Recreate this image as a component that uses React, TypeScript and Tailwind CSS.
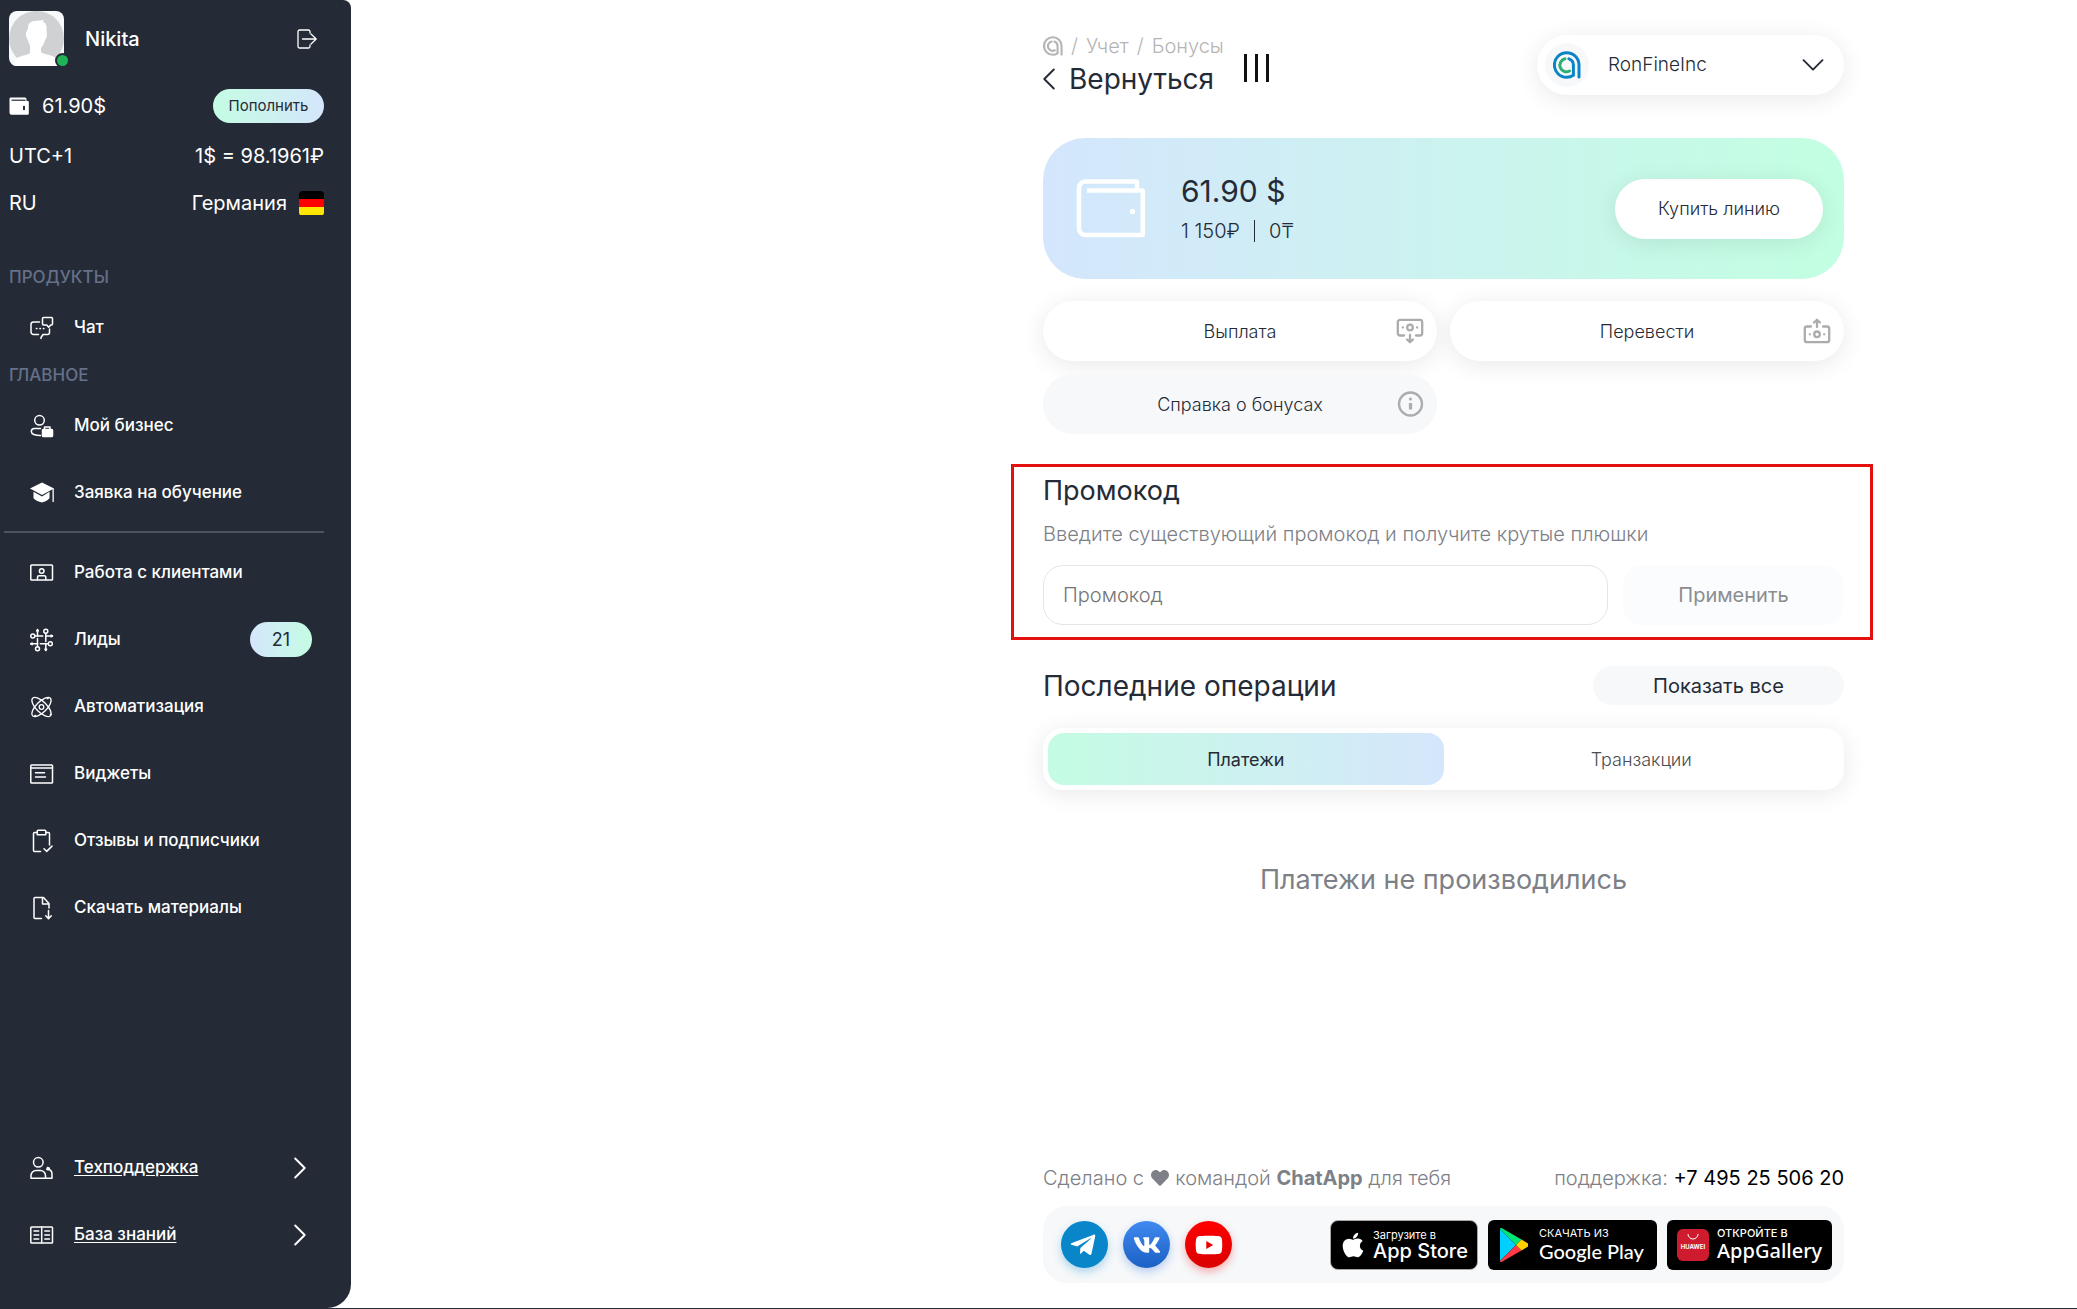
import React, { useState } from 'react';
import { FaApple, FaHeart, FaTelegramPlane, FaVk, FaYoutube } from 'react-icons/fa';

interface IconProps {
  className?: string;
}

const stroke = {
  fill: 'none',
  stroke: 'currentColor',
  strokeWidth: 1.5,
  strokeLinecap: 'round',
  strokeLinejoin: 'round',
} as const;

const ChatIcon = () => (
  <svg viewBox="0 0 24 24" className="size-6" {...stroke}>
    <path d="M13.5 1.5h8a1 1 0 0 1 1 1v5.500a1 1 0 0 1-1 1h-.8l-2 2.300-2-2.300h-3.200a1 1 0 0 1-1-1v-5.500a1 1 0 0 1 1-1z" />
    <path d="M9.500 6H3.500a2.500 2.500 0 0 0-2.500 2.500v7.500a2.500 2.500 0 0 0 2.500 2.500h5M11 22.500v-1l2-3h4.500a2 2 0 0 0 2-2v-3.500" />
    <path d="M6.500 12.500h.3M10 12.500h.3M13.500 12.500h.3" strokeWidth="1.7" />
  </svg>
);

const BusinessIcon = () => (
  <svg viewBox="0 0 24 24" className="size-6" {...stroke}>
    <circle cx="9.500" cy="6.300" r="4.800" />
    <path d="M10.500 21.500C5 21.500 1.300 20 1.300 17.500c0-2.500 1.500-2.900 3.200-2.900h6" />
    <path d="M14.500 15.500v-2.500h5.500v2.500" />
    <rect x="12.500" y="15.500" width="10" height="7" rx=".8" fill="currentColor" />
  </svg>
);

const CapIcon = () => (
  <svg viewBox="0 0 24 24" className="size-6" fill="currentColor">
    <path d="M0 7.500 12 1.500l12 6-12 6.500z" />
    <path d="M3.500 10.800 12 15.500l7.500-4.700v6.500c-2 2-4.500 3.600-7.500 4.200-3.500-.6-6.500-2.200-8.500-4.200z" />
    <path d="M22.500 7.500h1.300V21h-1.300z" />
  </svg>
);

const ClientsIcon = () => (
  <svg viewBox="0 0 24 24" className="size-6" {...stroke}>
    <rect x=".8" y="4" width="21.700" height="15" rx=".8" />
    <circle cx="11.700" cy="10" r="2.300" />
    <path d="M7.500 18.800v-2.600a1.500 1.500 0 0 1 1.500-1.500h5.300a1.500 1.500 0 0 1 1.500 1.500v2.600" />
  </svg>
);

const LeadsIcon = () => (
  <svg viewBox="0 0 24 24" className="size-6" {...stroke}>
    <circle cx="2.800" cy="8" r="2" />
    <circle cx="15.800" cy="3.200" r="2" />
    <circle cx="20.300" cy="15.800" r="2" />
    <circle cx="7.500" cy="20.800" r="2" />
    <path d="M4.800 8h8M15.800 5.200v8.300M18.300 15.800h-8M7.500 18.800v-8.300" />
    <path d="M15.800 8h6.500M1 15.800h6.500M7.500 8V1.700M15.800 15.800v6.300" />
    <path d="M21 7.200 22.500 8 21 8.800M2.200 15 .7 15.800l1.500.8M6.700 2.900 7.500 1.500l.8 1.400M15 21.200l.8 1.300.8-1.300" />
  </svg>
);

const AtomIcon = () => (
  <svg viewBox="0 0 24 24" className="size-6" {...stroke} strokeWidth="1.300">
    <ellipse cx="11.500" cy="12" rx="12.500" ry="5.300" transform="rotate(45 11.500 12)" />
    <ellipse cx="11.500" cy="12" rx="12.500" ry="5.300" transform="rotate(-45 11.500 12)" />
    <circle cx="11.500" cy="12" r="2.300" />
    <path d="M17.500 3.300h.4M5 20.700h.4M20.700 19.500v.3" strokeWidth="2" />
  </svg>
);

const WidgetsIcon = () => (
  <svg viewBox="0 0 24 24" className="size-6" {...stroke}>
    <rect x=".8" y="3" width="21.700" height="18" rx=".8" />
    <path d="M1 6h21.500M5.500 10.800h9M5.500 15h10" />
  </svg>
);

const ReviewsIcon = () => (
  <svg viewBox="0 0 24 24" className="size-6" {...stroke}>
    <path d="M7 3.500H4.500a1 1 0 0 0-1 1v17a1 1 0 0 0 1 1h6M16 3.500h2.500a1 1 0 0 1 1 1V16" />
    <path d="M7.200 2.300a1 1 0 0 1 1-1h6.600a1 1 0 0 1 1 1v3.500H7.200z" />
    <path d="m14 19.800 2.700 2.600 5.300-5.300" />
  </svg>
);

const MaterialsIcon = () => (
  <svg viewBox="0 0 24 24" className="size-6" {...stroke}>
    <path d="M11.500 22.500H5a1 1 0 0 1-1-1V2.500a1 1 0 0 1 1-1h8.500L19 7.500v4.500M12.500 1.800V8h6.300" />
    <path d="M18.500 14.500v8M15.700 19.800l2.800 2.800 2.800-2.800" />
  </svg>
);

const SupportIcon = () => (
  <svg viewBox="0 0 24 24" className="size-6" {...stroke}>
    <circle cx="8.300" cy="6.300" r="4.800" />
    <path d="M1 22.300v-2.800a5 5 0 0 1 5-5h4.500a5 5 0 0 1 5 5v2.800zM15.500 22.300H22v-4.500c0-2-.8-3.300-2.500-4.300" />
    <path d="M17.500 11.500l1.800.7-.5 1.600-2-.4z" fill="currentColor" />
  </svg>
);

const BookIcon = () => (
  <svg viewBox="0 0 24 24" className="size-6" {...stroke}>
    <rect x=".8" y="4" width="21.700" height="16" rx=".8" />
    <path d="M11.700 4v16M4 8h4.700M4 12h4.700M4 16h4.700M14.800 8h4.700M14.800 12h4.700M14.800 16h4.700" />
  </svg>
);

const LogoutIcon = () => (
  <svg viewBox="0 0 20 20" className="size-5" {...stroke} strokeWidth="1.300">
    <path d="M13 4V2.500a1.500 1.500 0 0 0-1.500-1.500H2.500A1.500 1.500 0 0 0 1 2.500v15A1.500 1.500 0 0 0 2.500 19h9a1.500 1.500 0 0 0 1.500-1.500V16" />
    <path d="M5.500 10H19M14 5l5.200 5-5.200 5" />
  </svg>
);

const WalletSolidIcon = () => (
  <svg viewBox="0 0 20 20" className="size-5">
    <path d="M2 1.500h14a1.500 1.500 0 0 1 1.500 1.500v2H19a.8.8 0 0 1 .8.800v12a1 1 0 0 1-1 1H2.500a2 2 0 0 1-2-2v-14A1.500 1.500 0 0 1 2 1.500z" fill="#fff" />
    <path d="M2.500 4.200h14" stroke="#242b37" strokeWidth="1.200" />
    <rect x="14" y="9.700" width="2" height="4.500" rx=".7" fill="#242b37" />
  </svg>
);

const WalletOutlineIcon = () => (
  <svg viewBox="0 0 70 60" className="h-[60px] w-[70px]" fill="none" stroke="#fff" strokeWidth="4.500">
    <path d="M61 11V3.500a1 1 0 0 0-1-1H9.500a6.500 6.500 0 0 0-6.500 6.500v40.500a6.500 6.500 0 0 0 6.500 6.500h56.500a.8.800 0 0 0 .8-.8V12.200a.8.800 0 0 0-.8-.8H11" />
    <rect x="54" y="30" width="5" height="5" rx="1.500" fill="#fff" stroke="none" />
  </svg>
);

const PayoutIcon = () => (
  <svg viewBox="0 0 28 28" className="size-7" {...stroke} strokeWidth="2.300">
    <path d="M8 18.500H4a2.200 2.200 0 0 1-2.200-2.200V5A2.200 2.200 0 0 1 4 2.800h20a2.200 2.200 0 0 1 2.200 2.200v11.300A2.200 2.200 0 0 1 24 18.500h-4" />
    <circle cx="14" cy="10.500" r="2.800" />
    <path d="M6.800 10.500h.1M21.100 10.500h.1M14 18v7M11 22.500l3 2.700 3-2.700" />
  </svg>
);

const TransferIcon = () => (
  <svg viewBox="0 0 28 28" className="size-7" {...stroke} strokeWidth="2.300">
    <path d="M8 9.500H4a2.200 2.200 0 0 0-2.200 2.200v11.300A2.200 2.200 0 0 0 4 25.200h20a2.200 2.200 0 0 0 2.200-2.200V11.700A2.200 2.200 0 0 0 24 9.500h-4" />
    <circle cx="14" cy="17.300" r="2.800" />
    <path d="M6.800 17.300h.1M21.100 17.300h.1M14 10V3M11 5.500l3-2.700 3 2.700" />
  </svg>
);

const InfoIcon = () => (
  <svg viewBox="0 0 28 28" className="size-7" {...stroke} strokeWidth="2.300">
    <circle cx="14.500" cy="14" r="11.500" />
    <path d="M14.500 13v6.500" strokeWidth="3.200" strokeLinecap="butt" />
    <path d="M14.500 9v.1" strokeWidth="3" />
  </svg>
);

const ChevronIcon: React.FC<IconProps> = ({ className }) => (
  <svg viewBox="0 0 12 22" className={className} {...stroke} strokeWidth="1.900">
    <path d="m1.200 1.500 9.500 9.500-9.500 9.500" />
  </svg>
);

const ChatAppMark: React.FC<IconProps & { inner: string }> = ({ className, inner }) => (
  <svg viewBox="0 0 28 28" className={className} fill="none" strokeWidth="3" strokeLinecap="round">
    <path d="M26 26V14A12.300 12.300 0 1 0 13.700 26.300c2.500 0 4.700-.7 6.700-2V14a6.600 6.600 0 0 0-4.500-6.200" stroke="currentColor" />
    <path d="M12 7.700a6.600 6.600 0 1 0 4.500 12.300" stroke={inner} />
  </svg>
);

const PlayTriangle = () => (
  <svg viewBox="0 0 28 34" className="h-[34px] w-7">
    <path d="M0 1v32l16-16z" fill="#00d0ff" />
    <path d="M0 1c0-1 1-1.300 2-.7L21.500 11.500 16 17z" fill="#00e676" />
    <path d="M0 33c0 1 1 1.300 2 .7L21.500 22.500 16 17z" fill="#ff3a44" />
    <path d="M21.500 11.500 28 15.500c1 .8 1 2.200 0 3L21.500 22.500 16 17z" fill="#ffcf00" />
  </svg>
);

const HuaweiMark = () => (
  <span className="flex h-8 w-8 flex-col items-center rounded-md bg-[#ce1b2d] pt-1">
    <svg viewBox="0 0 12 8" className="h-2 w-3" fill="none" stroke="#fff">
      <path d="M1 1a5 5 0 0 0 10 0" />
    </svg>
    <span className="text-[6px] leading-[12px] font-bold">HUAWEI</span>
  </span>
);

const mainItems = [
  { label: 'Мой бизнес', icon: <BusinessIcon /> },
  { label: 'Заявка на обучение', icon: <CapIcon /> },
];

const workItems = [
  { label: 'Работа с клиентами', icon: <ClientsIcon /> },
  { label: 'Лиды', icon: <LeadsIcon />, badge: 21 },
  { label: 'Автоматизация', icon: <AtomIcon /> },
  { label: 'Виджеты', icon: <WidgetsIcon /> },
  { label: 'Отзывы и подписчики', icon: <ReviewsIcon /> },
  { label: 'Скачать материалы', icon: <MaterialsIcon /> },
];

const helpItems = [
  { label: 'Техподдержка', icon: <SupportIcon /> },
  { label: 'База знаний', icon: <BookIcon /> },
];

interface NavItemProps {
  label: string;
  icon: React.ReactNode;
  badge?: number;
  help?: boolean;
}

const NavItem: React.FC<NavItemProps> = ({ label, icon, badge, help }) => (
  <a href="#" className="flex h-[67px] items-center pr-3 pl-[21px] text-[17px] font-medium">
    {icon}
    <span className={help ? 'ml-5 underline underline-offset-2' : 'ml-5'}>{label}</span>
    {badge && (
      <span className="ml-auto flex h-[35px] w-[62px] items-center justify-center rounded-full bg-linear-to-r from-[#d5e6fc] to-[#c4fce3] text-[18px] font-normal text-[#242b37]">
        {badge}
      </span>
    )}
    {help && <ChevronIcon className="mr-[6px] ml-auto h-[22px] w-3" />}
  </a>
);

const Sidebar = () => (
  <aside className="flex w-[351px] shrink-0 flex-col rounded-br-3xl rounded-tr-lg bg-[#242b37] pr-[27px] pb-10 pl-[9px] text-white">
    <div className="flex items-center pt-[11px]">
      <div className="relative">
        <svg viewBox="0 0 55 55" className="size-[55px] rounded-lg bg-[#f7f9fb]">
          <circle cx="27.500" cy="27.500" r="27.500" fill="#cfd1d2" />
          <path d="M19 17c0-5 3-7 7-7l9-1-1 2c3 1 4 4 3.500 8 0 3 1 4 .2 7-.5 2-1.500 2-2 4-.5 3-2.500 5-3.700 7v4c3 3 11 2 16 7l5 7H2l4-6c4-5 11-4 15-7v-8c-2-3-2-5-3-7-2-3-1-5 1-10z" fill="#fff" />
        </svg>
        <span className="absolute -right-[6px] -bottom-[2px] size-[15px] rounded-full border-2 border-[#242b37] bg-[#1fb355]" />
      </div>
      <span className="ml-[21px] text-xl font-medium">Nikita</span>
      <button aria-label="Выйти" className="mr-[7px] ml-auto">
        <LogoutIcon />
      </button>
    </div>
    <div className="mt-[23px] flex h-[34px] items-center">
      <WalletSolidIcon />
      <span className="ml-[13px] text-xl">61.90$</span>
      <button className="ml-auto h-[34px] w-[111px] rounded-full bg-linear-to-r from-[#c4fce3] to-[#d5e6fc] text-[15px] text-[#242b37]">
        Пополнить
      </button>
    </div>
    <div className="mt-[10px] flex h-[46px] items-center justify-between text-xl">
      <span>UTC+1</span>
      <span>1$ = 98.1961₽</span>
    </div>
    <div className="flex h-12 items-center text-xl">
      <span>RU</span>
      <span className="mr-3 ml-auto">Германия</span>
      <span className="flex size-[25px] flex-col overflow-hidden rounded-sm">
        <span className="flex-1 bg-black" />
        <span className="flex-1 bg-[#fe0000]" />
        <span className="flex-1 bg-[#ffe600]" />
      </span>
    </div>
    <nav className="mt-9">
      <h2 className="mb-[3px] text-[17px] leading-7 font-medium text-[#65708a]">ПРОДУКТЫ</h2>
      <NavItem label="Чат" icon={<ChatIcon />} />
      <h2 className="mb-[3px] text-[17px] leading-7 font-medium text-[#65708a]">ГЛАВНОЕ</h2>
      {mainItems.map((item) => (
        <NavItem key={item.label} {...item} />
      ))}
      <hr className="mt-[5px] mb-[6px] -ml-[5px] border-t-2 border-[#4d535f]" />
      {workItems.map((item) => (
        <NavItem key={item.label} {...item} />
      ))}
    </nav>
    <nav className="mt-auto">
      {helpItems.map((item) => (
        <NavItem key={item.label} {...item} help />
      ))}
    </nav>
  </aside>
);

interface ActionButtonProps {
  label: string;
  icon: React.ReactNode;
  muted?: boolean;
}

const ActionButton: React.FC<ActionButtonProps> = ({ label, icon, muted }) => (
  <button
    className={`relative h-[60px] rounded-full text-[18px] font-light ${
      muted ? 'bg-[#f6f8fa]' : 'bg-white shadow-[0_4px_24px_rgba(0,0,0,0.09)]'
    }`}
  >
    {label}
    <span className="absolute top-4 right-[13px] text-[#acacac]">{icon}</span>
  </button>
);

const Header = () => (
  <header className="flex items-end pt-[34px]">
    <div>
      <div className="flex h-6 items-center gap-2 text-xl font-light text-[#b5b5b5]">
        <a href="#" aria-label="Главная">
          <ChatAppMark className="size-5" inner="currentColor" />
        </a>
        <span>/</span>
        <a href="#">Учет</a>
        <span>/</span>
        <a href="#">Бонусы</a>
      </div>
      <button className="mt-[5px] flex items-center gap-[14px] text-[28px] leading-8 font-normal">
        <ChevronIcon className="h-[22px] w-3 rotate-180" />
        Вернуться
      </button>
    </div>
    <button aria-label="Меню" className="mb-[13px] ml-5 flex gap-2">
      <span className="h-7 w-[3px] bg-[#111]" />
      <span className="h-7 w-[3px] bg-[#111]" />
      <span className="h-7 w-[3px] bg-[#111]" />
    </button>
    <div className="relative ml-auto h-[60px] w-[307px] rounded-full bg-white shadow-[0_4px_24px_rgba(0,0,0,0.09)]">
      <select
        aria-label="Компания"
        className="h-[60px] w-full appearance-none rounded-full bg-transparent pr-14 pl-[71px] text-[19px] font-light"
      >
        <option>RonFineInc</option>
      </select>
      <span className="pointer-events-none absolute top-2 left-2 flex size-11 items-center justify-center rounded-full bg-[#f6f8fa]">
        <ChatAppMark className="size-7 text-[#0b84c6]" inner="#2fae73" />
      </span>
      <ChevronIcon className="pointer-events-none absolute top-[19px] right-[25px] h-[22px] w-3 rotate-90" />
    </div>
  </header>
);

const Balance = () => (
  <section className="mt-[43px] flex h-[141px] items-center rounded-[42px] bg-linear-to-r from-[#d4e6fd] to-[#c2ffe1] pr-[21px] pl-[33px]">
    <WalletOutlineIcon />
    <div className="ml-[35px]">
      <p className="text-[30px] leading-10">61.90 $</p>
      <p className="mt-1 flex h-8 items-center gap-[14px] text-xl font-light">
        1 150₽
        <span className="h-[22px] w-px bg-[#242b37]" />
        0₸
      </p>
    </div>
    <button className="ml-auto h-[60px] w-[208px] rounded-full bg-white text-[18px] font-light shadow-[0_4px_24px_rgba(0,0,0,0.09)]">
      Купить линию
    </button>
  </section>
);

const PromoCode = () => {
  const [code, setCode] = useState('');

  return (
    <section className="mt-[30px] -mr-[29px] -ml-8 border-[3px] border-[#e3100f] pr-[26px] pb-3 pl-[29px]">
      <h2 className="pt-2 text-[27px] leading-8">Промокод</h2>
      <label htmlFor="promo" className="mt-[11px] block text-xl leading-8 font-light text-[#7d8087]">
        Введите существующий промокод и получите крутые плюшки
      </label>
      <div className="mt-[15px] flex gap-[15px]">
        <input
          id="promo"
          value={code}
          onChange={(e) => setCode(e.target.value)}
          placeholder="Промокод"
          className="h-[60px] min-w-0 flex-1 rounded-[20px] border border-[#e3e5e7] px-[19px] text-xl font-light outline-none placeholder:text-[#757575]"
        />
        <button disabled={!code} className="h-[60px] w-[221px] rounded-[20px] bg-[#f6f8fa] text-xl disabled:bg-[#fafcfd] disabled:text-[#8b8d90]">
          Применить
        </button>
      </div>
    </section>
  );
};

const tabs = ['Платежи', 'Транзакции'];

const Operations = () => {
  const [active, setActive] = useState('Платежи');

  return (
    <section className="mt-[26px]">
      <div className="flex h-[39px] items-center justify-between">
        <h2 className="text-[28px] leading-8">Последние операции</h2>
        <button className="h-[39px] w-[251px] rounded-full bg-[#f6f8fa] text-xl">Показать все</button>
      </div>
      <div className="mt-[23px] grid h-[62px] grid-cols-2 rounded-[20px] bg-white p-[5px] shadow-[0_4px_24px_rgba(0,0,0,0.09)]">
        {tabs.map((tab) => (
          <button
            key={tab}
            onClick={() => setActive(tab)}
            className={`rounded-2xl text-[18px] ${
              tab === active ? 'bg-linear-to-r from-[#c4fce3] to-[#d5e6fc]' : 'font-light text-[#4a4d52]'
            }`}
          >
            {tab}
          </button>
        ))}
      </div>
      <p className="mt-[74px] text-center text-[27px] leading-8 text-[#7d8087]">Платежи не производились</p>
    </section>
  );
};

const Footer = () => (
  <footer className="mt-auto pb-[25px]">
    <div className="flex items-center justify-between text-xl leading-8 font-light text-[#7d8087]">
      <p>
        Сделано с <FaHeart className="mx-px inline size-[18px] align-[-2px]" /> командой <b className="font-bold">ChatApp</b> для тебя
      </p>
      <p>
        поддержка: <a href="tel:+74952550620" className="font-normal text-black">+7 495 25 506 20</a>
      </p>
    </div>
    <div className="mt-3 flex h-[77px] items-center rounded-3xl bg-[#f6f8fa] pr-3 pl-[18px] text-white">
      <a href="#" aria-label="Telegram" className="flex size-[47px] items-center justify-center rounded-full bg-[#0886c9] shadow-[0_4px_8px_rgba(8,134,201,0.3)]">
        <FaTelegramPlane className="mr-1 size-7" />
      </a>
      <a href="#" aria-label="VK" className="ml-[15px] flex size-[47px] items-center justify-center rounded-full bg-linear-to-b from-[#3f8af0] to-[#1c60c4] shadow-[0_4px_8px_rgba(40,110,220,0.3)]">
        <FaVk className="size-7" />
      </a>
      <a href="#" aria-label="YouTube" className="ml-[15px] flex size-[47px] items-center justify-center rounded-full bg-linear-to-b from-[#ff0000] to-[#da0000] shadow-[0_4px_8px_rgba(240,0,0,0.3)]">
        <FaYoutube className="size-7" />
      </a>
      <a href="#" className="ml-auto flex h-[50px] w-[148px] items-center rounded-lg border border-[#a6a6a6] bg-black pl-2">
        <FaApple className="size-7" />
        <span className="ml-[6px] flex flex-col">
          <span className="text-[11px] leading-3">Загрузите в</span>
          <span className="text-xl leading-5 font-medium">App Store</span>
        </span>
      </a>
      <a href="#" className="ml-[10px] flex h-[50px] w-[169px] items-center rounded-md bg-black pl-3">
        <PlayTriangle />
        <span className="ml-[11px] flex flex-col">
          <span className="text-[11px] leading-3">СКАЧАТЬ ИЗ</span>
          <span className="font-[Lato,sans-serif] text-xl leading-6 font-medium">Google Play</span>
        </span>
      </a>
      <a href="#" className="ml-[10px] flex h-[50px] w-[165px] items-center rounded-md bg-black pl-[10px]">
        <HuaweiMark />
        <span className="ml-2 flex flex-col">
          <span className="text-[11px] leading-3 font-medium">ОТКРОЙТЕ В</span>
          <span className="font-['Noto_Sans',sans-serif] text-xl leading-6 font-medium">AppGallery</span>
        </span>
      </a>
    </div>
  </footer>
);

export default function App() {
  return (
    <div className="flex min-h-screen border-b border-[#242b37] bg-white font-[Inter,'Open_Sans',sans-serif] text-[#242b37]">
      <Sidebar />
      <main className="flex flex-1 justify-end pr-[233px]">
        <div className="flex w-full max-w-[801px] flex-col">
          <Header />
          <Balance />
          <div className="mt-[22px] grid grid-cols-2 gap-[13px]">
            <ActionButton label="Выплата" icon={<PayoutIcon />} />
            <ActionButton label="Перевести" icon={<TransferIcon />} />
            <ActionButton label="Справка о бонусах" icon={<InfoIcon />} muted />
          </div>
          <PromoCode />
          <Operations />
          <Footer />
        </div>
      </main>
    </div>
  );
}
